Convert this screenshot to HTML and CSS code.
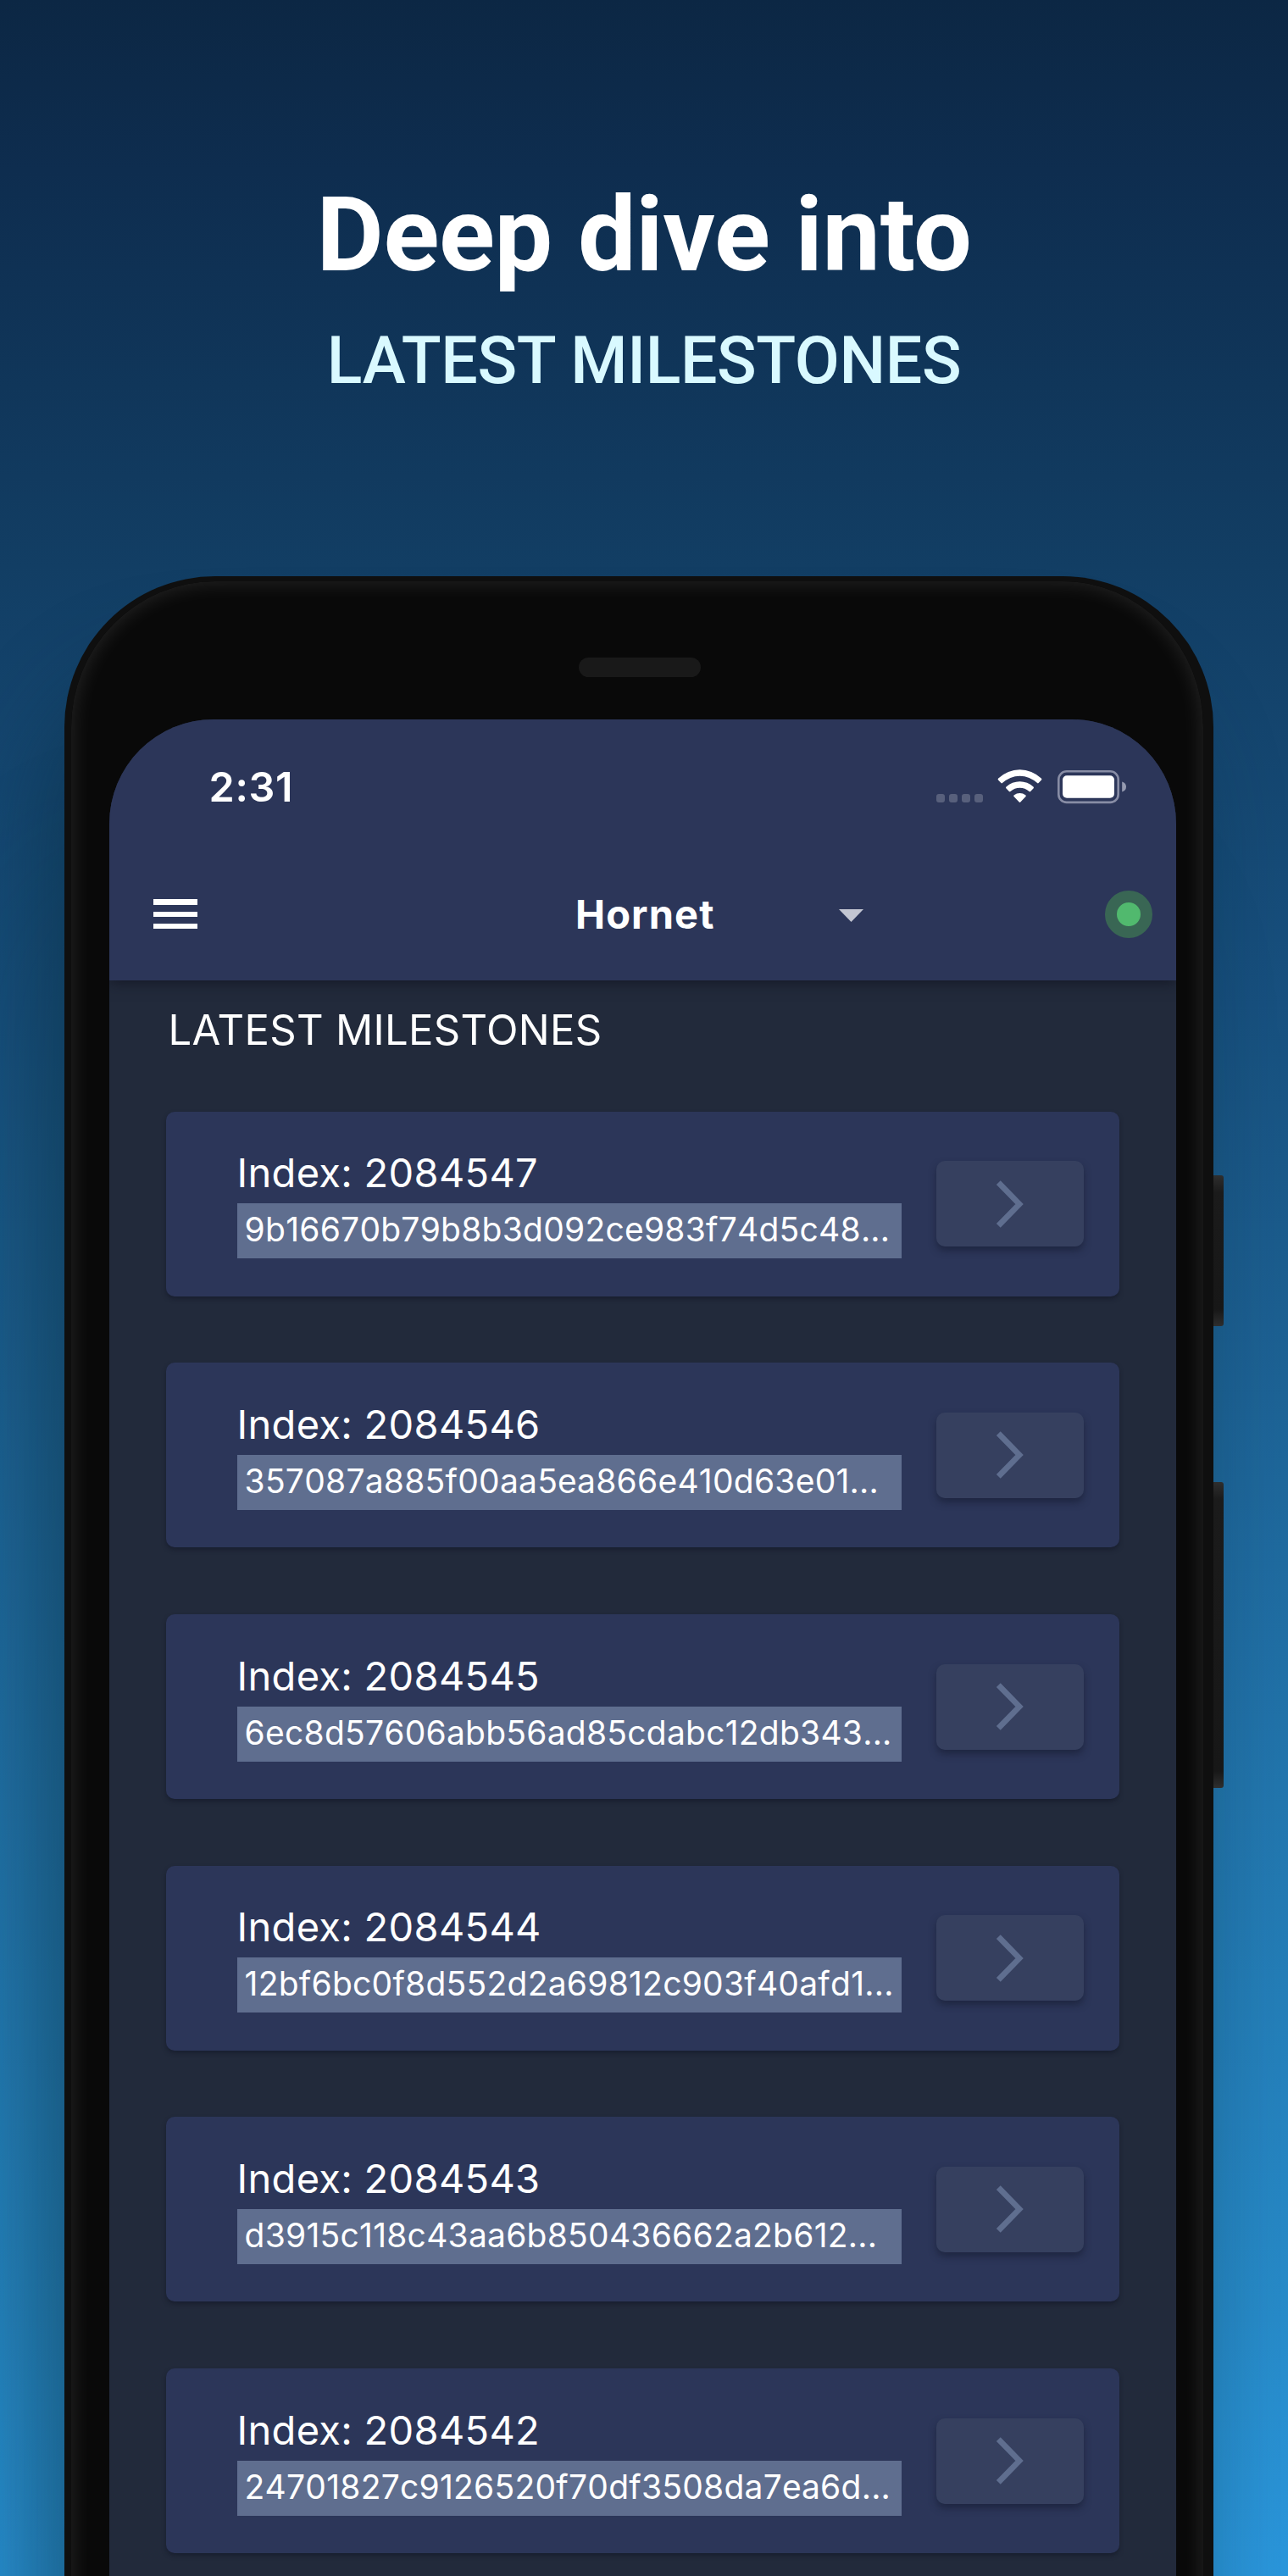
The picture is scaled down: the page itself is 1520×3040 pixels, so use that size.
FILE: index.html
```html
<!DOCTYPE html>
<html lang="en">
<head>
<meta charset="utf-8">
<title>Latest Milestones</title>
<link rel="stylesheet" href="styles.css">
</head>
<body>
<svg width="0" height="0" class="defs">
  <symbol id="chevron" viewBox="0 0 34 58"><path d="M3.3 3.6 28 29 3.3 54.4" fill="none" stroke="#5f6e8f" stroke-width="6.8"/></symbol>
</svg>
<main class="poster">
  <header class="headline">
    <h1 class="title">Deep dive into</h1>
    <p class="subtitle">LATEST MILESTONES</p>
  </header>
  <div class="phone">
    <div class="side-button power"></div>
    <div class="side-button volume"></div>
    <div class="earpiece"></div>
    <div class="screen">
      <div class="topbar">
        <div class="status">
          <span class="clock">2:31</span>
          <div class="status-icons">
            <div class="signal"><i></i><i></i><i></i><i></i></div>
            <svg class="wifi" width="54" height="39" viewBox="0 0.3 54 37.5" preserveAspectRatio="none" fill="#fff">
              <path d="M1 12.2Q0.2 11.3 1.2 10.4A37.5 37.5 0 0 1 51.8 10.4Q52.8 11.3 52 12.2L48.6 15.8Q47.9 16.5 47.1 15.8A30.3 30.3 0 0 0 5.9 15.8Q5.1 16.5 4.4 15.8Z"/>
              <path d="M10.3 21.6Q9.6 20.7 10.5 19.9A24.3 24.3 0 0 1 42.5 19.9Q43.4 20.7 42.7 21.6L39.1 25.3Q38.4 26 37.6 25.3A17.2 17.2 0 0 0 15.4 25.3Q14.6 26 13.9 25.3Z"/>
              <path d="M19.5 31.1Q18.8 30.2 19.8 29.5A11.4 11.4 0 0 1 33.2 29.5Q34.2 30.2 33.5 31.1L27.3 37.4Q26.5 38 25.7 37.4Z"/>
            </svg>
            <svg class="battery" width="82" height="40" viewBox="0 0 82 40">
              <rect x="1.3" y="1.3" width="70.4" height="36.6" rx="9.5" fill="none" stroke="#888da5" stroke-width="2.6"/>
              <rect x="6" y="6.2" width="61" height="26.6" rx="5" fill="#fff"/>
              <path d="M76.2 13.6q4.8 1.5 4.8 6t-4.8 6z" fill="#959ab0"/>
            </svg>
          </div>
        </div>
        <div class="appbar">
          <div class="menu"><i></i><i></i><i></i></div>
          <div class="node"><span class="node-name">Hornet</span>
            <svg class="caret" width="29" height="15" viewBox="0 0 29 15"><path d="M0 0h29L14.5 15z" fill="#c3c6d2"/></svg>
          </div>
          <div class="health"></div>
        </div>
      </div>
      <h2 class="section">LATEST MILESTONES</h2>
      <div class="list">
        <article class="card"><div class="info"><p class="index">Index: 2084547</p><p class="hash">9b16670b79b8b3d092ce983f74d5c48...</p></div><div class="open"><svg width="34" height="58"><use href="#chevron"/></svg></div></article>
        <article class="card"><div class="info"><p class="index">Index: 2084546</p><p class="hash">357087a885f00aa5ea866e410d63e01...</p></div><div class="open"><svg width="34" height="58"><use href="#chevron"/></svg></div></article>
        <article class="card"><div class="info"><p class="index">Index: 2084545</p><p class="hash">6ec8d57606abb56ad85cdabc12db343...</p></div><div class="open"><svg width="34" height="58"><use href="#chevron"/></svg></div></article>
        <article class="card"><div class="info"><p class="index">Index: 2084544</p><p class="hash">12bf6bc0f8d552d2a69812c903f40afd1...</p></div><div class="open"><svg width="34" height="58"><use href="#chevron"/></svg></div></article>
        <article class="card"><div class="info"><p class="index">Index: 2084543</p><p class="hash">d3915c118c43aa6b850436662a2b612...</p></div><div class="open"><svg width="34" height="58"><use href="#chevron"/></svg></div></article>
        <article class="card"><div class="info"><p class="index">Index: 2084542</p><p class="hash">24701827c9126520f70df3508da7ea6d...</p></div><div class="open"><svg width="34" height="58"><use href="#chevron"/></svg></div></article>
      </div>
    </div>
  </div>
</main>
</body>
</html>
```
FILE: styles.css
```css
* { box-sizing: border-box; margin: 0; padding: 0; }
body { font-family: Inter, "Liberation Sans", sans-serif; color: #fff; }
.defs { display: block; }

.poster {
  width: 1520px; height: 3040px; overflow: hidden;
  background: linear-gradient(180deg, #0c2744 0%, #0e2d4f 6.6%, #10365a 15%, #123e64 22%, #185180 39%, #1b5989 45%, #2377af 70%, #288cca 90%, #2b97dc 100%);
}
.headline { height: 680px; padding-top: 206px; text-align: center; font-family: Roboto, sans-serif; }
.title { font-size: 122px; line-height: 143px; font-weight: 700; letter-spacing: -0.3px; }
.subtitle { margin-top: 32px; font-size: 77px; line-height: 90px; font-weight: 500; letter-spacing: -0.35px; color: #d9f9ff; }

.phone {
  position: relative; width: 1356px; height: 2600px; margin-left: 76px;
  padding-top: 90px;
  background: #090909; border: solid #0f0f0f; border-width: 6px 12px 0 8px;
  border-radius: 178px 178px 0 0;
  box-shadow: inset 0 0 26px rgba(255,255,255,.13), -30px 110px 110px rgba(10,42,58,.44), -70px 320px 160px rgba(10,42,58,.16);
}
.side-button {
  position: absolute; left: 1348px; width: 12px; border-radius: 0 3px 3px 0;
  background: linear-gradient(#2e2e2e, #1b1b1b 20px, #171717 calc(100% - 20px), #2e2e2e);
}
.power { top: 701px; height: 178px; }
.volume { top: 1063px; height: 361px; }
.earpiece { width: 144px; height: 23px; margin-left: 599px; border-radius: 12px; background: #191919; }

.screen {
  width: 1259.4px; height: 2400px; margin: 49.7px 0 0 44.6px; overflow: hidden;
  background: #222a3b; border-radius: 123px 123px 0 0;
}
.topbar { position: relative; height: 308.6px; background: #2c3659; box-shadow: 0 2px 16px rgba(15,18,30,.75); }
.status { display: flex; justify-content: space-between; padding: 50px 58px 0 118px; height: 180.3px; }
.clock { font-size: 48.5px; line-height: 60px; font-weight: 600; letter-spacing: .6px; }
.status-icons { display: flex; align-items: flex-start; padding-top: 9.3px; }
.signal { display: flex; gap: 5px; margin: 28.9px 17px 0 0; }
.signal i { width: 10px; height: 10px; border-radius: 3px; background: #58607c; }
.wifi { margin-right: 17px; }
.battery { margin-top: 1px; }

.appbar { display: flex; align-items: center; height: 100px; padding: 0 28px 0 52.4px; }
.menu { display: flex; flex-direction: column; gap: 7.3px; width: 52px; }
.menu i { height: 6.8px; background: #fff; }
.node { display: flex; align-items: center; justify-content: space-between; width: 340px; margin: 0 auto 0 446px; }
.node-name { font-size: 47px; line-height: 60px; font-weight: 700; letter-spacing: 1.1px; }
.caret { margin-top: 3px; }
.health { width: 56px; height: 56px; border-radius: 50%; background: #51b96e; border: 14px solid #396654; }

.section { height: 88px; padding: 29px 0 0 70px; font-size: 49px; line-height: 60px; font-weight: 400; letter-spacing: .3px; }
.list { display: flex; flex-direction: column; gap: 78.7px; padding: 66.4px 67.2px 0 67px; }
.card {
  display: flex; align-items: center; justify-content: space-between; height: 218px;
  padding: 0 42px 0 84px; background: #2c3659; border-radius: 10px;
  box-shadow: 0 3px 5px rgba(15,20,35,.5);
}
.info { width: 784px; align-self: flex-start; padding-top: 48.7px; }
.index { padding-bottom: 12px; font-size: 47px; line-height: 48px; letter-spacing: .3px; white-space: nowrap; }
.hash { height: 65px; padding-left: 9px; font-size: 39px; line-height: 61px; letter-spacing: .24px; font-kerning: none; white-space: nowrap; background: #5f6e8f; }
.open {
  display: flex; align-items: center; justify-content: center; width: 174px; height: 101px;
  border-radius: 10px; background: #36405f; box-shadow: 0 5px 8px rgba(20,25,45,.55);
}
```
